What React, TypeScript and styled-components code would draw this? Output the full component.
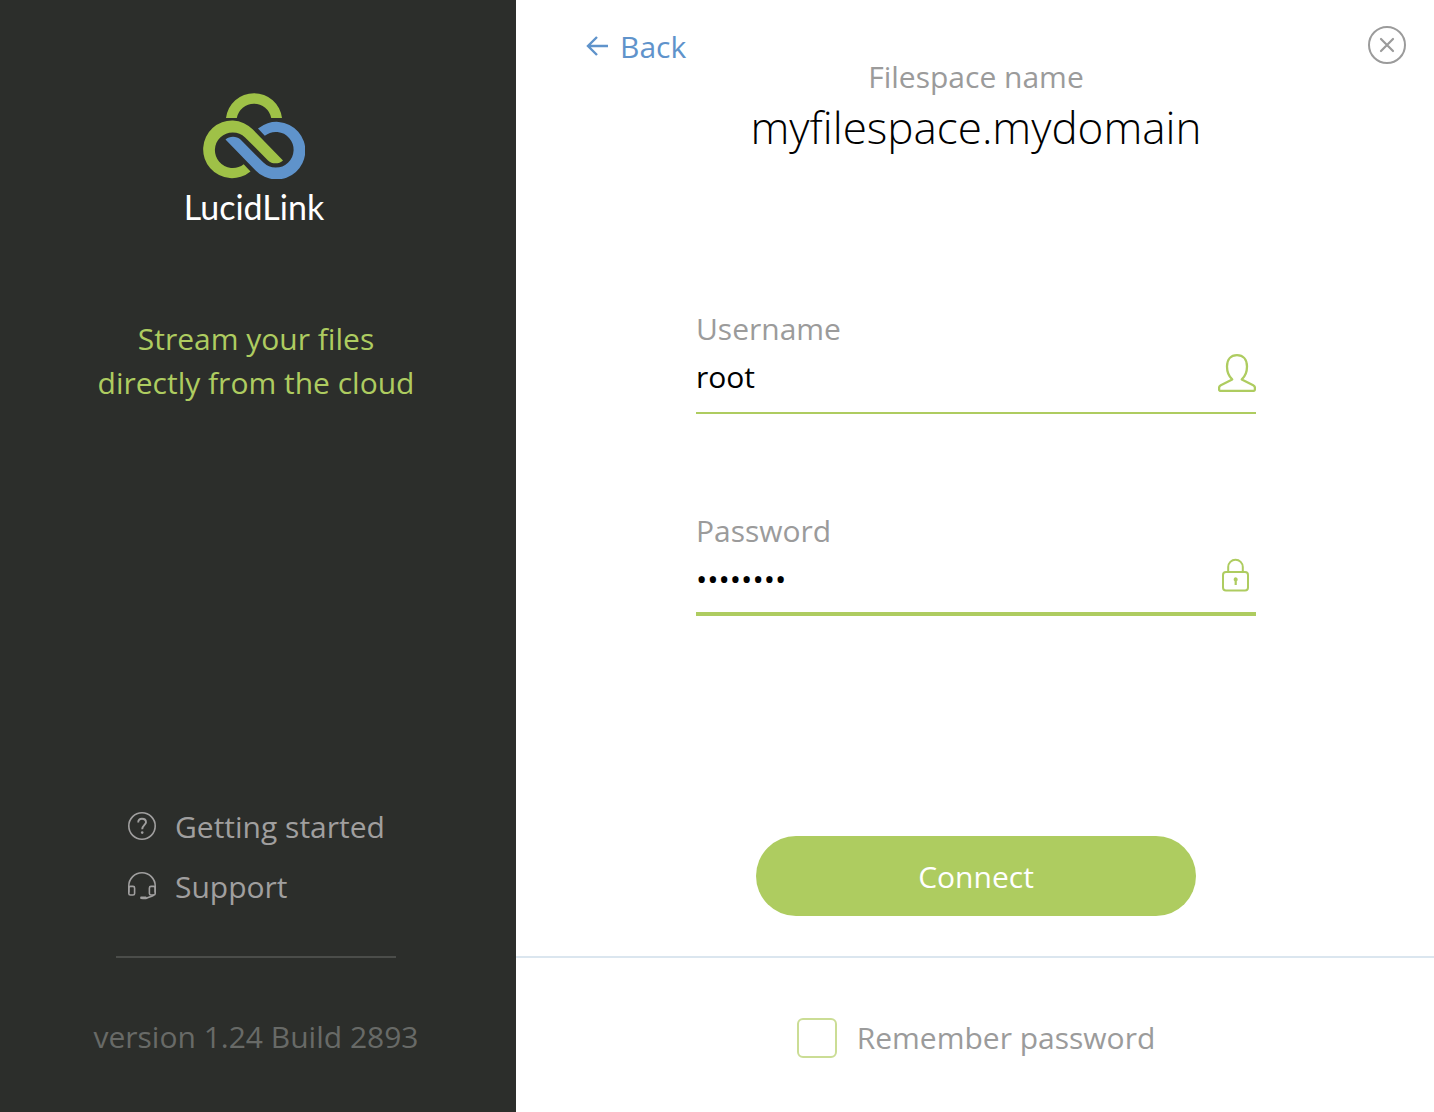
import React, { useState } from "react";
import styled, { createGlobalStyle } from "styled-components";

const color = {
  dark: "#2c2e2b",
  lime: "#aecc60",
  limeSoft: "#cbdd95",
  logoGreen: "#9fc147",
  blue: "#5f93cb",
  gray: "#9b9b9b",
  linkGray: "#a09f9f",
  dimGray: "#686a67",
  ruleDark: "#4b4d4a",
  ruleLight: "#dbe6ef",
};

const GlobalStyle = createGlobalStyle`
  *, *::before, *::after { box-sizing: border-box; }
  body {
    margin: 0;
    background: #fff;
    font-family: "Open Sans", "Noto Sans", sans-serif;
    font-size: 30px;
    line-height: 40px;
  }
  button, input { font: inherit; }
`;

const Window = styled.div`
  display: flex;
  min-height: 100vh;
`;

const Sidebar = styled.aside`
  flex: 0 0 516px;
  display: flex;
  flex-direction: column;
  align-items: center;
  padding: 93px 4px 0 0;
  background: ${color.dark};
`;

const Brand = styled.div`
  display: flex;
  flex-direction: column;
  align-items: center;
  gap: 8px;
  padding-right: 4px;
`;

const BrandMark = styled.svg`
  display: block;
  width: 102px;
  height: 86px;
`;

const BrandName = styled.span`
  color: #fff;
  font-family: Lato, "Open Sans", sans-serif;
  font-size: 34px;
`;

const Tagline = styled.p`
  margin: 90px 0 0;
  color: ${color.lime};
  line-height: 44px;
  text-align: center;
`;

const SideNav = styled.nav`
  display: flex;
  flex-direction: column;
  gap: 20px;
  width: 280px;
  margin-top: auto;
  padding: 0 0 49px 12px;
  border-bottom: 2px solid ${color.ruleDark};
`;

const SideLink = styled.a`
  display: flex;
  align-items: center;
  gap: 19px;
  color: ${color.linkGray};
  text-decoration: none;
  white-space: nowrap;
`;

const SideIcon = styled.svg`
  flex: none;
  width: 28px;
  height: 28px;
  margin-bottom: 2px;
`;

const Version = styled.footer`
  display: flex;
  align-items: center;
  justify-content: center;
  height: 154px;
  padding-top: 4px;
  color: ${color.dimGray};
`;

const Main = styled.main`
  flex: 1;
  display: flex;
  flex-direction: column;
  min-width: 0;
`;

const Header = styled.header`
  display: grid;
  grid-template-columns: 1fr auto 1fr;
  align-items: start;
  padding-left: 2px;
`;

const BackButton = styled.button`
  display: flex;
  align-items: center;
  justify-self: start;
  gap: 12px;
  margin: 27px 0 0 68px;
  padding: 0;
  border: 0;
  background: none;
  color: ${color.blue};
  cursor: pointer;
`;

const BackArrow = styled.svg`
  width: 22px;
  height: 20px;
  margin-bottom: 2px;
`;

const Heading = styled.div`
  display: flex;
  flex-direction: column;
  align-items: center;
  padding-top: 57px;
  color: ${color.gray};
`;

const FilespaceName = styled.h1`
  margin: 0;
  color: #000;
  font-size: 44px;
  font-weight: 300;
  line-height: 60px;
`;

const CloseButton = styled.button`
  display: flex;
  justify-self: end;
  margin: 26px 28px 0 0;
  padding: 0;
  border: 0;
  background: none;
  color: ${color.gray};
  cursor: pointer;
`;

const LoginForm = styled.form`
  flex: 1;
  display: flex;
  flex-direction: column;
  align-items: center;
  padding: 152px 0 40px 2px;
`;

const Fields = styled.div`
  display: flex;
  flex-direction: column;
  gap: 97px;
  width: 560px;
  max-width: 100%;
`;

const Field = styled.div`
  display: flex;
  flex-direction: column;
`;

const FieldLabel = styled.label`
  color: ${color.gray};
`;

const FieldRow = styled.div<{ $active?: boolean }>`
  display: flex;
  align-items: center;
  height: 65px;
  padding-bottom: ${(p) => (p.$active ? 13 : 15)}px;
  border-bottom: ${(p) => (p.$active ? 4 : 2)}px solid ${color.lime};
`;

const TextInput = styled.input`
  flex: 1;
  min-width: 0;
  height: 48px;
  padding: 6px 0 0;
  border: 0;
  outline: 0;
  background: none;
  color: #000;
`;

const ConnectButton = styled.button`
  width: 440px;
  max-width: 100%;
  height: 80px;
  margin-top: auto;
  padding: 2px 0 0;
  border: 0;
  border-radius: 40px;
  background: ${color.lime};
  color: #fff;
  cursor: pointer;
`;

const Footer = styled.footer`
  display: flex;
  align-items: center;
  justify-content: center;
  height: 156px;
  padding-left: 2px;
  border-top: 2px solid ${color.ruleLight};
`;

const Remember = styled.label`
  display: flex;
  align-items: center;
  gap: 20px;
  padding-top: 6px;
  color: ${color.gray};
`;

const Checkbox = styled.input`
  appearance: none;
  width: 40px;
  height: 40px;
  margin: 0;
  border: 2px solid ${color.limeSoft};
  border-radius: 6px;
  background: #fff;
  &:checked {
    background: ${color.lime};
  }
`;

function LogoMark() {
  return (
    <BrandMark viewBox="202 92 102 86" aria-hidden="true">
      <path
        fill={color.logoGreen}
        d="M225 117A28.2 28.2 0 0 1 281 117H270.2A17.5 17.5 0 0 0 235.8 117Z"
      />
      <path
        fill={color.logoGreen}
        d="M249.5 170.4A28.8 28.8 0 1 1 251.9 128.6L282 159.4C278 163.2 271 163.2 267 159.4L244.1 136.4A17.8 17.8 0 1 0 242.7 163.2Z"
      />
      <path
        fill={color.blue}
        d="M257 127.6A28.8 28.8 0 1 1 254.6 169.4L224.5 138.6C228.5 134.8 235.5 134.8 239.5 138.6L262.4 161.6A17.8 17.8 0 1 0 263.8 134.8Z"
      />
    </BrandMark>
  );
}

function QuestionIcon() {
  return (
    <SideIcon viewBox="0 0 28 28" fill="none" stroke="currentColor" strokeWidth="1.6" aria-hidden="true">
      <circle cx="14" cy="14" r="13.2" />
      <path d="M10.2 10.6C10.2 8.2 11.8 6.8 14 6.8S18 8.2 18 10.3C18 12.6 14.2 13.6 14.2 17.2" strokeWidth="1.9" />
      <circle cx="14.2" cy="20.6" r="1.3" fill="currentColor" stroke="none" />
    </SideIcon>
  );
}

function HeadsetIcon() {
  return (
    <SideIcon viewBox="0 0 28 28" fill="none" stroke="currentColor" strokeWidth="1.6" strokeLinecap="round" strokeLinejoin="round" aria-hidden="true">
      <path d="M.8 20V14A13.2 13.2 0 0 1 27.2 14V20" />
      <rect x=".8" y="14.4" width="5.8" height="8.6" rx="1.6" />
      <rect x="21.4" y="14.4" width="5.8" height="8.6" rx="1.6" />
      <path d="M25.6 23.2C23.6 24.4 21 25.2 18.6 26.2C17.4 26.6 15 26.4 13 26.2V25.2H17.8" />
    </SideIcon>
  );
}

function ArrowIcon() {
  return (
    <BackArrow viewBox="0 0 22 20" fill="none" stroke="currentColor" strokeWidth="2.4" aria-hidden="true">
      <path d="M11 1L2 10L11 19M2 10H22" />
    </BackArrow>
  );
}

function CloseIcon() {
  return (
    <svg width="38" height="38" viewBox="0 0 38 38" fill="none" stroke="currentColor" strokeWidth="2" aria-hidden="true">
      <circle cx="19" cy="19" r="18" />
      <path d="M13 13L25 25M25 13L13 25" strokeLinecap="round" strokeWidth="2.2" />
    </svg>
  );
}

function UserIcon() {
  return (
    <svg width="38" height="38" viewBox="0 0 38 38" fill="none" stroke={color.lime} strokeWidth="2.3" strokeLinejoin="round" aria-hidden="true">
      <path d="M14.2 25.4C10.8 22.4 9 18 9 12.6C9 5.6 12.8 1.2 19 1.2S29 5.6 29 12.6C29 18 27.2 22.4 23.8 25.4L35.2 31.2C36.4 31.8 36.9 32.6 36.9 33.8V35.4C36.9 36.4 36.4 36.9 35.4 36.9H2.6C1.6 36.9 1.1 36.4 1.1 35.4V33.8C1.1 32.6 1.6 31.8 2.8 31.2Z" />
    </svg>
  );
}

function LockIcon() {
  return (
    <svg width="38" height="34" viewBox="0 0 38 34" fill="none" stroke={color.lime} strokeWidth="2" aria-hidden="true">
      <rect x="5" y="14" width="25" height="18.4" rx="3" />
      <path d="M10.2 14V9A7.3 7.3 0 0 1 24.8 9V14" />
      <path d="M17.5 19.2A2.2 2.2 0 0 1 18.8 23.2V27H16.6V23.2A2.2 2.2 0 0 1 17.5 19.2Z" fill={color.lime} stroke="none" />
    </svg>
  );
}

export default function App() {
  const [username, setUsername] = useState("root");
  const [password, setPassword] = useState("password");

  return (
    <>
      <GlobalStyle />
      <Window>
        <Sidebar>
          <Brand>
            <LogoMark />
            <BrandName>LucidLink</BrandName>
          </Brand>
          <Tagline>
            Stream your files
            <br />
            directly from the cloud
          </Tagline>
          <SideNav>
            <SideLink href="#getting-started">
              <QuestionIcon />
              Getting started
            </SideLink>
            <SideLink href="#support">
              <HeadsetIcon />
              Support
            </SideLink>
          </SideNav>
          <Version>version 1.24 Build 2893</Version>
        </Sidebar>
        <Main>
          <Header>
            <BackButton type="button">
              <ArrowIcon />
              Back
            </BackButton>
            <Heading>
              Filespace name
              <FilespaceName>myfilespace.mydomain</FilespaceName>
            </Heading>
            <CloseButton type="button" aria-label="Close">
              <CloseIcon />
            </CloseButton>
          </Header>
          <LoginForm id="login" onSubmit={(e) => e.preventDefault()}>
            <Fields>
              <Field>
                <FieldLabel htmlFor="username">Username</FieldLabel>
                <FieldRow>
                  <TextInput id="username" value={username} onChange={(e) => setUsername(e.target.value)} />
                  <UserIcon />
                </FieldRow>
              </Field>
              <Field>
                <FieldLabel htmlFor="password">Password</FieldLabel>
                <FieldRow $active>
                  <TextInput
                    id="password"
                    type="password"
                    value={password}
                    onChange={(e) => setPassword(e.target.value)}
                  />
                  <LockIcon />
                </FieldRow>
              </Field>
            </Fields>
            <ConnectButton type="submit">Connect</ConnectButton>
          </LoginForm>
          <Footer>
            <Remember>
              <Checkbox type="checkbox" form="login" />
              Remember password
            </Remember>
          </Footer>
        </Main>
      </Window>
    </>
  );
}
